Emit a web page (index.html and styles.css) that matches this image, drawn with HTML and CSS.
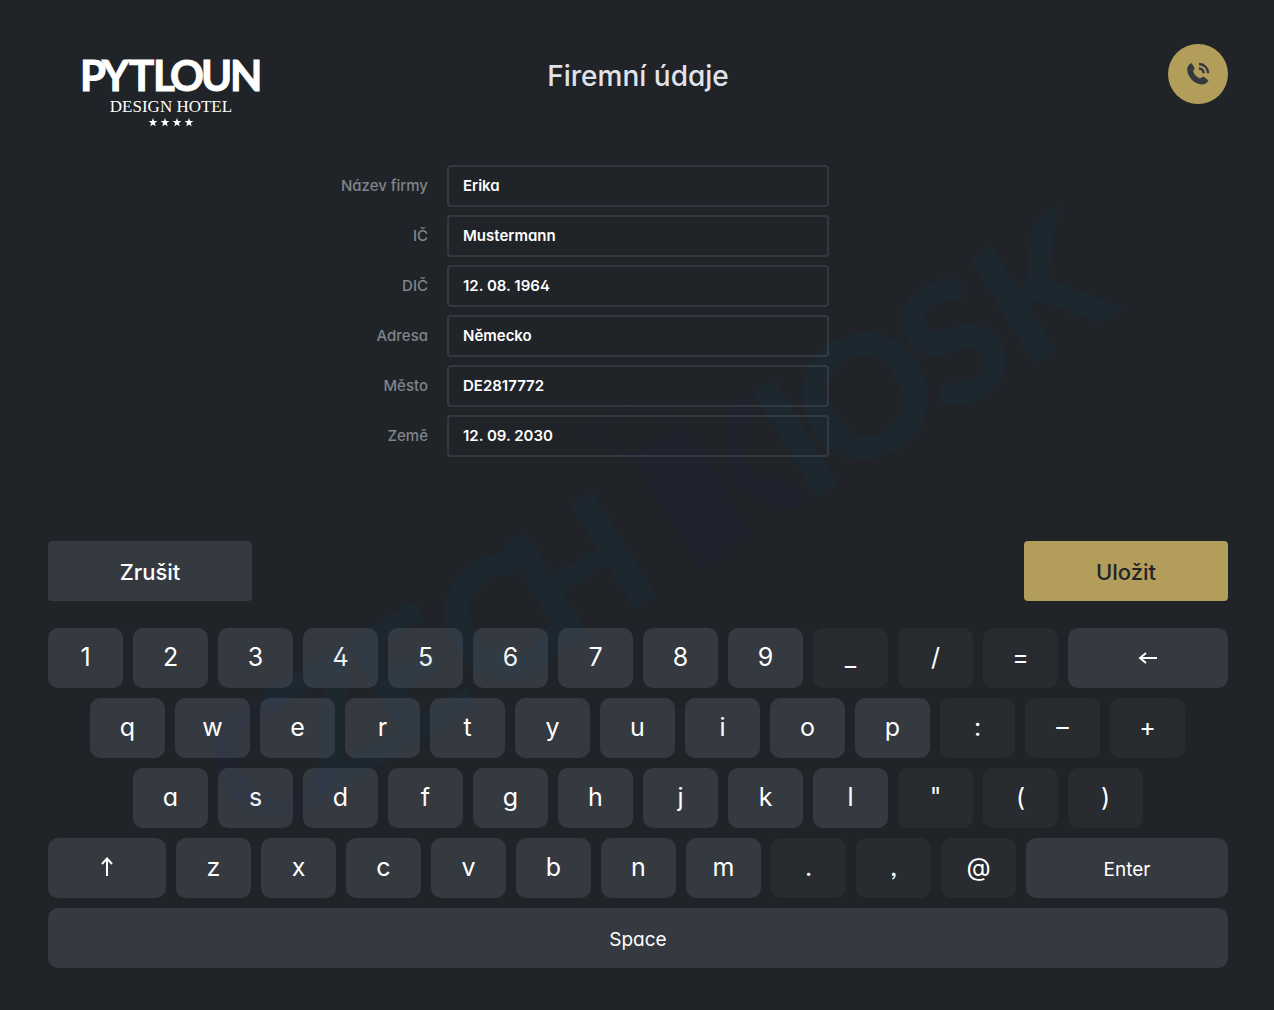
FILE: index.html
```
<!DOCTYPE html>
<html lang="cs">
<head>
    <meta charset="UTF-8">
    <meta name="viewport" content="width=device-width, initial-scale=1.0">
    <title>Firemní údaje</title>
    <link rel="stylesheet" href="styles.css">
</head>
<body>
    <header class="header">
        <a class="logo" href="#" aria-label="Pytloun Design Hotel">
            <svg width="180" height="70" viewBox="0 0 180 70">
                <text class="logo-name" x="-2 20 47 71 88 119 148" y="32">PYTLOUN</text>
                <text class="logo-sub" x="89" y="53" text-anchor="middle">DESIGN HOTEL</text>
                <g fill="#fff">
                    <path id="star" d="M71 59l1.1 3.1h3.3l-2.6 2 .9 3.2-2.700-1.900-2.700 1.900.9-3.200-2.600-2h3.300z"/>
                    <use href="#star" x="12"/>
                    <use href="#star" x="24"/>
                    <use href="#star" x="36"/>
                </g>
            </svg>
        </a>
        <h1>Firemní údaje</h1>
        <button class="call-button" type="button" aria-label="Zavolat recepci">
            <svg width="24" height="24" viewBox="0 0 24 24" fill="#343940">
                <path d="M5.500 1C2.500 2.500.8 5 1.200 8.500 2 15.500 8.500 22 15.500 22.500c3 .1 5.500-1.200 7-4L17.500 14.600l-3.600 2C11 15.500 8.300 12.600 7.200 9.600L8.600 6z"/>
                <path d="M13 2c5.200.2 9 4 9.200 9.200M13 6.500c2.700.2 4.500 2 4.700 4.700" fill="none" stroke="#343940" stroke-width="2.400"/>
            </svg>
        </button>
    </header>

    <main>
        <form id="company-form" class="form">
            <label for="company">Název firmy</label>
            <input type="text" id="company" value="Erika">
            <label for="ic">IČ</label>
            <input type="text" id="ic" value="Mustermann">
            <label for="dic">DIČ</label>
            <input type="text" id="dic" value="12. 08. 1964">
            <label for="address">Adresa</label>
            <input type="text" id="address" value="Německo">
            <label for="city">Město</label>
            <input type="text" id="city" value="DE2817772">
            <label for="country">Země</label>
            <input type="text" id="country" value="12. 09. 2030">
        </form>

        <div class="actions">
            <button class="btn" type="reset" form="company-form">Zrušit</button>
            <button class="btn btn-primary" type="submit" form="company-form">Uložit</button>
        </div>

        <div class="keyboard">
            <div class="row">
                <button class="key">1</button>
                <button class="key">2</button>
                <button class="key">3</button>
                <button class="key">4</button>
                <button class="key">5</button>
                <button class="key">6</button>
                <button class="key">7</button>
                <button class="key">8</button>
                <button class="key">9</button>
                <button class="key symbol">_</button>
                <button class="key symbol">/</button>
                <button class="key symbol">=</button>
                <button class="key backspace" aria-label="Smazat">
                    <svg width="20" height="14" viewBox="0 0 20 14"><path d="M19 8H2M8 3L2 8l6 5"/></svg>
                </button>
            </div>
            <div class="row row-second">
                <button class="key">q</button>
                <button class="key">w</button>
                <button class="key">e</button>
                <button class="key">r</button>
                <button class="key">t</button>
                <button class="key">y</button>
                <button class="key">u</button>
                <button class="key">i</button>
                <button class="key">o</button>
                <button class="key">p</button>
                <button class="key symbol">:</button>
                <button class="key symbol">–</button>
                <button class="key symbol">+</button>
            </div>
            <div class="row row-third">
                <button class="key">a</button>
                <button class="key">s</button>
                <button class="key">d</button>
                <button class="key">f</button>
                <button class="key">g</button>
                <button class="key">h</button>
                <button class="key">j</button>
                <button class="key">k</button>
                <button class="key">l</button>
                <button class="key symbol">"</button>
                <button class="key symbol">(</button>
                <button class="key symbol">)</button>
            </div>
            <div class="row">
                <button class="key shift" aria-label="Shift">
                    <svg width="14" height="20" viewBox="0 0 14 20"><path d="M7 19V2M2 7l5-5.500L12 7"/></svg>
                </button>
                <button class="key">z</button>
                <button class="key">x</button>
                <button class="key">c</button>
                <button class="key">v</button>
                <button class="key">b</button>
                <button class="key">n</button>
                <button class="key">m</button>
                <button class="key symbol">.</button>
                <button class="key symbol">,</button>
                <button class="key symbol">@</button>
                <button class="key word enter">Enter</button>
            </div>
            <div class="row">
                <button class="key word">Space</button>
            </div>
        </div>
    </main>

    <svg class="watermark" viewBox="0 0 1274 1010" aria-hidden="true">
        <g class="mark-dark">
            <text transform="rotate(-31.500)" x="-226" y="849">C</text>
            <path d="M585 432l52-32q28 12 50 30 10 8 16 22l49 83-52 34-65-109zM593 432l37 23 47-25-40-25z" fill-rule="evenodd"/>
            <path d="M750 395l-20 12-7 70 3 4 67 30 20-13-68-31z"/>
        </g>
        <g class="mark-light">
            <g transform="rotate(-31.500)">
                <text x="-142 -52 45 133" y="849">ZECH</text>
                <text x="425 464 589 680" y="849">IOSK</text>
            </g>
        </g>
    </svg>
</body>
</html>
```
FILE: styles.css
```
:root {
    --bg-color: #202328;
    --key-color: #353940;
    --symbol-color: #282b30;
    --gold: #b39d5b;
    --label-color: #7f858a;
}

* {
    box-sizing: border-box;
}

body {
    font-family: Inter, Lato, sans-serif;
    font-feature-settings: "cv11", "cv02", "ss03";
    background-color: var(--bg-color);
    color: #fff;
    margin: 0;
    padding: 44px 46px 42px 48px;
    position: relative;
}

button,
input {
    font: inherit;
    font-feature-settings: inherit;
    color: inherit;
}

button {
    border: none;
    padding: 0;
    cursor: pointer;
}

.header {
    display: grid;
    grid-template-columns: 1fr auto 1fr;
    align-items: start;
}

.logo {
    padding: 15px 0 0 34px;
}

.logo svg {
    display: block;
    overflow: visible;
}

.logo-name {
    font-family: Lato, sans-serif;
    font-size: 42px;
    font-weight: 700;
    fill: #fff;
    stroke: #fff;
    stroke-width: 1;
}

.logo-sub {
    font-family: "Liberation Serif", serif;
    font-size: 17px;
    fill: #fff;
}

h1 {
    margin: 0;
    font-size: 28px;
    line-height: 64px;
    font-weight: 500;
    color: #e1e3e8;
}

.call-button {
    width: 60px;
    height: 60px;
    border-radius: 50%;
    background-color: var(--gold);
    display: flex;
    justify-content: center;
    align-items: center;
    justify-self: end;
}

.form {
    display: grid;
    grid-template-columns: 1fr 382px 1fr;
    gap: 8px 19px;
    margin-top: 36px;
}

.form label {
    grid-column: 1;
    text-align: right;
    font-size: 15px;
    line-height: 42px;
    font-weight: 500;
    color: var(--label-color);
}

.form input {
    height: 42px;
    padding: 0 14px 2px;
    border: 2px solid #35393f;
    border-radius: 4px;
    background: none;
    font-size: 15px;
    font-weight: 600;
    outline: none;
}

.form input:focus {
    border-color: var(--gold);
}

.actions {
    display: flex;
    justify-content: space-between;
    margin-top: 84px;
}

.btn {
    width: 204px;
    height: 60px;
    padding-top: 2px;
    border-radius: 4px;
    background-color: var(--key-color);
    font-size: 22px;
    font-weight: 500;
}

.btn-primary {
    background-color: var(--gold);
    color: var(--bg-color);
}

.keyboard {
    display: flex;
    flex-direction: column;
    gap: 10px;
    margin-top: 27px;
}

.row {
    display: flex;
    gap: 10px;
}

.row-second {
    padding: 0 43px 0 42px;
}

.row-third {
    padding: 0 85px;
}

.key {
    flex: 75 1 0;
    height: 60px;
    padding-bottom: 3px;
    border-radius: 10px;
    background-color: var(--key-color);
    font-size: 25px;
    display: flex;
    justify-content: center;
    align-items: center;
}

.key.symbol {
    background-color: var(--symbol-color);
}

.key.word {
    padding: 2px 0 0;
    font-size: 19px;
}

.key.backspace {
    flex-grow: 160;
}

.key.shift {
    flex-grow: 118;
}

.key.enter {
    flex-grow: 202;
}

.key svg {
    fill: none;
    stroke: #fff;
    stroke-width: 2;
}

/* vodoznak přes celou obrazovku */
.watermark {
    position: absolute;
    top: 0;
    left: 0;
    width: 100%;
    pointer-events: none;
    font-family: Lato, sans-serif;
    font-size: 165px;
    font-weight: 700;
}

.watermark text {
    stroke-width: 3;
}

.mark-light {
    fill: #08608c;
    stroke: #08608c;
    opacity: 0.08;
}

.mark-dark {
    fill: #203090;
    opacity: 0.06;
}
```
